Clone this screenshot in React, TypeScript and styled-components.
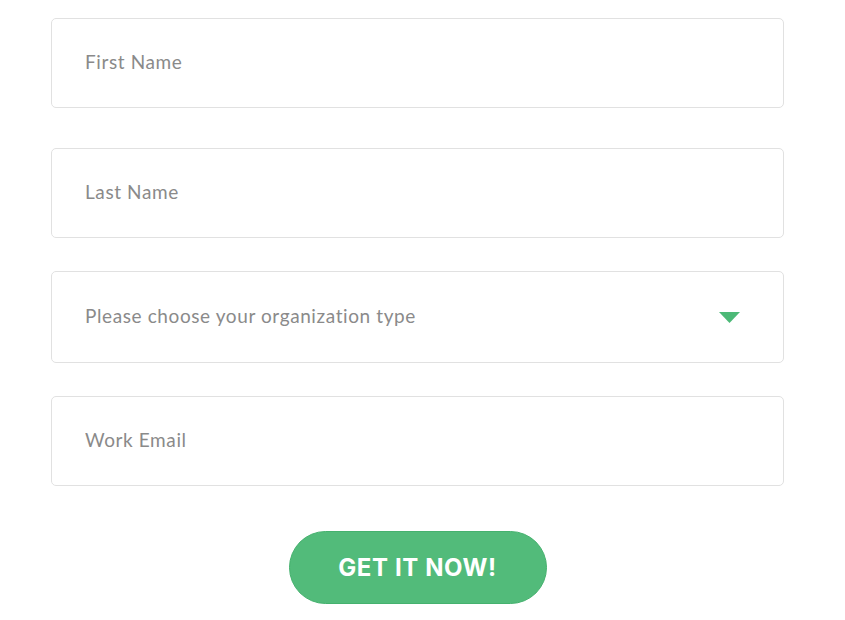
import React from 'react'
import styled, { createGlobalStyle } from 'styled-components'

const GlobalStyle = createGlobalStyle`
  body {
    margin: 0;
    background: #ffffff;
    font-family: Lato, "Open Sans", sans-serif;
  }
`

const fields = [
  { name: 'firstName', placeholder: 'First Name', height: 90, gap: 40 },
  { name: 'lastName', placeholder: 'Last Name', height: 90, gap: 33 },
]

const App: React.FunctionComponent = () => {
  return (
    <>
      <GlobalStyle />
      <Form onSubmit={(e) => e.preventDefault()}>
        {fields.map((field) => (
          <TextInput
            key={field.name}
            name={field.name}
            placeholder={field.placeholder}
            $height={field.height}
            $gap={field.gap}
          />
        ))}
        <SelectWrap>
          <Select defaultValue="">
            <option value="" disabled>
              Please choose your organization type
            </option>
            <option value="business">Business</option>
            <option value="education">Education</option>
            <option value="nonprofit">Non-profit</option>
          </Select>
          <Caret width="21" height="11" viewBox="0 0 21 11">
            <path d="M0 0 H21 L10.5 11 Z" fill="#4cb977" />
          </Caret>
        </SelectWrap>
        <TextInput name="email" type="email" placeholder="Work Email" $height={90} $gap={45} />
        <ButtonRow>
          <SubmitButton type="submit">GET IT NOW!</SubmitButton>
        </ButtonRow>
      </Form>
    </>
  )
}

export default App

const Form = styled.form`
  display: flex;
  flex-direction: column;
  width: 733px;
  padding: 18px 0 0 51px;
`

const fieldBase = `
  box-sizing: border-box;
  width: 100%;
  border: 1px solid #e1e1e1;
  border-radius: 5px;
  background: #ffffff;
  padding: 0 33px 3px;
  font-family: Lato, "Open Sans", sans-serif;
  font-size: 19px;
  letter-spacing: 0.6px;
  color: #888888;
  outline: none;
`

const TextInput = styled.input<{ $height: number; $gap: number }>`
  ${fieldBase}
  height: ${(p) => p.$height}px;
  margin: 0 0 ${(p) => p.$gap}px;

  &::placeholder {
    color: #8a8a8a;
  }
`

const SelectWrap = styled.div`
  position: relative;
  margin-bottom: 33px;
`

const Select = styled.select`
  ${fieldBase}
  display: block;
  height: 92px;
  appearance: none;
  -webkit-appearance: none;
  color: #8a8a8a;
`

const Caret = styled.svg`
  position: absolute;
  right: 44px;
  top: 41px;
  pointer-events: none;
`

const ButtonRow = styled.div`
  display: flex;
  justify-content: center;
`

const SubmitButton = styled.button`
  width: 258px;
  height: 73px;
  border: 1px solid #45b16e;
  border-radius: 37px;
  background: #52bb7a;
  color: #ffffff;
  font-family: Inter, Roboto, sans-serif;
  font-weight: 700;
  font-size: 24px;
  letter-spacing: 0.6px;
  cursor: pointer;
`
